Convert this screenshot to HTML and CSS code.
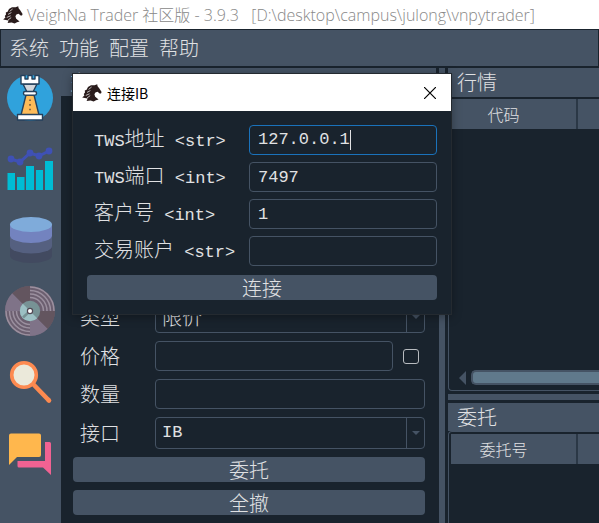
FILE: index.html
```html
<!DOCTYPE html>
<html lang="zh-CN">
<head>
<meta charset="utf-8">
<meta name="viewport" content="width=device-width, initial-scale=1">
<title>VeighNa Trader</title>
<link rel="stylesheet" href="styles.css">
</head>
<body>
<svg class="defs" aria-hidden="true">
  <symbol id="horse" viewBox="0 0 20 18">
    <path fill="#2a1c1c" d="M6 3 L9 1.200 L12.600 1.200 L15.200 .2 L15.600 2.200 L17.400 4.600 L19.600 8 L19 9.400 L17.600 9.600 L15.600 7.800 L13.400 8.400 L12.400 10.200 L13.200 12.800 L16.600 15.400 L14 16.200 L11.600 17.600 L8.600 16.400 L4.600 17 L5.600 14.600 L2.800 14 L.2 13.400 L2.400 11.400 L1.800 10 L3 8.600 L2.800 6.600 L4.600 5.800 Z"/>
    <path stroke="#fff" stroke-width=".7" fill="none" d="M9.600 3 L6.600 5.400 M8.400 6.600 L5 8.400 M3.800 11.400 L7.600 9.800 M5 14 L8.200 11.600"/>
  </symbol>
</svg>
<div class="app">
  <header class="titlebar">
    <svg class="logo" aria-hidden="true"><use href="#horse"/></svg>
    <span class="caption">VeighNa Trader 社区版 - 3.9.3   [D:\desktop\campus\julong\vnpytrader]</span>
  </header>
  <nav class="menubar">
    <button type="button">系统</button>
    <button type="button">功能</button>
    <button type="button">配置</button>
    <button type="button">帮助</button>
  </nav>
  <div class="workspace">
    <aside class="toolbar">
      <button type="button" aria-label="连接">
        <svg viewBox="0 0 50 50">
          <circle cx="25" cy="25" r="23" fill="#30a2dc"/>
          <g stroke="#24405c" stroke-width="1.4" stroke-linejoin="round">
            <path fill="#fdbb58" d="M21 22 H29 L34 42 H16 Z"/>
            <path fill="#d3d6db" d="M18 11 H32 L28 19 H22 Z"/>
            <path fill="#fff" d="M16 2.500 H20 V6 H23 V2.500 H27 V6 H30 V2.500 H34 V11 H16 Z"/>
            <rect x="18.500" y="18.500" width="13" height="3.600" rx="1.600" fill="#fff"/>
            <rect x="12.500" y="41.500" width="25" height="5.500" fill="#fff"/>
          </g>
          <path stroke="#5b4a3a" stroke-width="1.400" stroke-dasharray="1.600 3" d="M25 26.500 V38"/>
        </svg>
      </button>
      <button type="button" aria-label="图表">
        <svg viewBox="0 0 50 50">
          <path fill="#00bcd4" d="M2.500 29 H10 V46 H2.500Z M12 33 H19.500 V46 H12Z M21 22 H29 V46 H21Z M31 26 H38 V46 H31Z M40 17 H48 V46 H40Z"/>
          <path fill="none" stroke="#3f51b5" stroke-width="3" d="M6 15 L15 18 L25 9 L34 12 L44 7"/>
          <g fill="#3f51b5"><circle cx="6" cy="15" r="3.400"/><circle cx="15" cy="18" r="3.400"/><circle cx="25" cy="9" r="3.400"/><circle cx="34" cy="12" r="3.400"/><circle cx="44" cy="7" r="3.400"/></g>
        </svg>
      </button>
      <button type="button" aria-label="数据">
        <svg viewBox="0 0 50 50">
          <path fill="#424a60" d="M5 31 V40.500 A21 7.500 0 0 0 47 40.500 V31Z"/>
          <path fill="#556080" d="M5 20 V31 A21 7.500 0 0 0 47 31 V20Z"/>
          <path fill="#7383bf" d="M5 9.500 V20.500 A21 7.500 0 0 0 47 20.500 V9.500Z"/>
          <ellipse cx="26" cy="9.500" rx="21" ry="7.500" fill="#7fabda"/>
        </svg>
      </button>
      <button type="button" aria-label="录制">
        <svg viewBox="0 0 50 50">
          <circle cx="25" cy="25" r="25" fill="#6c5f70"/>
          <path fill="#7f7388" d="M25 25 L0 25 A25 25 0 0 1 7.300 7.300Z M25 25 V50 A25 25 0 0 0 42.700 42.700Z"/>
          <path fill="#63555f" d="M25 25 V0 A25 25 0 0 0 7.300 7.300Z M25 25 H50 A25 25 0 0 1 42.700 42.700Z"/>
          <g fill="none" stroke="#9b909f" stroke-width="1.500">
            <path d="M25 1 A24 24 0 0 1 49 25 M25 4.500 A20.500 20.500 0 0 1 45.500 25 M25 8 A17 17 0 0 1 42 25 M25 11.500 A13.500 13.500 0 0 1 38.500 25"/>
            <path d="M25 49 A24 24 0 0 1 1 25 M25 45.500 A20.500 20.500 0 0 1 4.500 25 M25 42 A17 17 0 0 1 8 25 M25 38.500 A13.500 13.500 0 0 1 11.500 25"/>
          </g>
          <circle cx="25" cy="25" r="10.200" fill="#779295"/>
          <path fill="#9cc0c4" d="M25 25 L17.800 17.800 A10.200 10.200 0 0 0 17.800 32.200Z M25 25 L17.800 32.200 A10.200 10.200 0 0 0 25 35.200Z M25 25 V35.200 A10.200 10.200 0 0 0 32.200 32.200Z"/>
          <path stroke="#779295" stroke-width="2.500" d="M25 25 L18 31.500"/>
          <circle cx="25" cy="25" r="2.600" fill="#fff" stroke="#514854" stroke-width="1.200"/>
        </svg>
      </button>
      <button type="button" aria-label="查询">
        <svg viewBox="0 0 50 50">
          <path stroke="#fd8a50" stroke-width="4.600" stroke-linecap="round" d="M29 28 L43 42.500 M43 42.500 L44 43.500"/>
          <circle cx="19" cy="18" r="12.300" fill="#ebe9da" stroke="#fd8a50" stroke-width="3.600"/>
        </svg>
      </button>
      <button type="button" aria-label="社区">
        <svg viewBox="0 0 50 50">
          <path fill="#f06292" d="M40 14 H44.500 Q46 14 46 15.500 V47 L38 39.500 H14 Q12.500 39.500 12.500 38 V33 H40Z"/>
          <path fill="#ffb74d" d="M6 5.500 H34 Q36 5.500 36 7.500 V27 Q36 29 34 29 H12 L4 37 V7.500 Q4 5.500 6 5.500Z"/>
        </svg>
      </button>
    </aside>

    <section class="dock trading">
      <h2 class="dock-title">交易</h2>
      <form class="order-form">
        <div class="field">
          <label for="kind">类型</label>
          <span class="select"><select id="kind"><option>限价</option></select></span>
        </div>
        <div class="field">
          <label for="price">价格</label>
          <input id="price" class="text" type="text">
          <input class="tick" type="checkbox" aria-label="价格">
        </div>
        <div class="field">
          <label for="volume">数量</label>
          <input id="volume" class="text" type="text">
        </div>
        <div class="field">
          <label for="gateway">接口</label>
          <span class="select"><select id="gateway" class="latin"><option>IB</option></select></span>
        </div>
        <button class="action" type="button">委托</button>
        <button class="action" type="button">全撤</button>
      </form>
    </section>

    <div class="splitter"></div>

    <div class="monitors">
      <section class="dock market">
        <h2 class="dock-title">行情</h2>
        <div class="frame">
          <table>
            <thead><tr><th scope="col">代码</th><th></th></tr></thead>
          </table>
          <div class="scrollbar"><i class="arrow"></i><i class="thumb"></i></div>
        </div>
      </section>
      <div class="splitter-row"></div>
      <section class="dock orders">
        <h2 class="dock-title">委托</h2>
        <div class="frame">
          <table>
            <thead><tr><th scope="col">委托号</th><th></th></tr></thead>
          </table>
        </div>
      </section>
    </div>
  </div>
</div>

<div class="dialog" role="dialog" aria-labelledby="dialog-title">
  <div class="dialog-bar">
    <svg class="logo" aria-hidden="true"><use href="#horse"/></svg>
    <span id="dialog-title" class="dialog-title">连接IB</span>
    <button type="button" class="close" aria-label="关闭">
      <svg viewBox="0 0 12 12"><path d="M0 0 L12 12 M12 0 L0 12" stroke="#000" stroke-width="1.200"/></svg>
    </button>
  </div>
  <form class="dialog-form">
    <div class="field">
      <label for="host"><span class="latin">TWS</span>地址<span class="latin"> &lt;str&gt;</span></label>
      <span class="text focused"><input id="host" type="text" value="127.0.0.1"><i class="caret"></i></span>
    </div>
    <div class="field">
      <label for="port"><span class="latin">TWS</span>端口<span class="latin"> &lt;int&gt;</span></label>
      <input id="port" class="text" type="text" value="7497">
    </div>
    <div class="field">
      <label for="client">客户号<span class="latin"> &lt;int&gt;</span></label>
      <input id="client" class="text" type="text" value="1">
    </div>
    <div class="field">
      <label for="account">交易账户<span class="latin"> &lt;str&gt;</span></label>
      <input id="account" class="text" type="text">
    </div>
    <button class="action" type="button">连接</button>
  </form>
</div>
</body>
</html>
```
FILE: styles.css
```css
:root {
  --dark: #19232d;
  --grey: #455364;
  --text: #e0e1e3;
  --ui: "Noto Sans CJK SC", sans-serif;
  --mono: "Liberation Mono", "Noto Sans CJK SC", monospace;
}

* { box-sizing: border-box; }

body {
  margin: 0;
  background: var(--dark);
  color: var(--text);
  font: 300 20px/24px var(--ui);
  overflow: hidden;
}

button, input, select {
  margin: 0;
  padding: 0;
  border: 0;
  background: none;
  color: inherit;
  font: inherit;
}

.defs { position: absolute; width: 0; height: 0; }
.latin { font-family: var(--mono); font-size: 17px; white-space: pre; }
.logo { width: 20px; height: 18px; flex: none; }

.app {
  display: flex;
  flex-direction: column;
  height: 100vh;
}

.titlebar {
  display: flex;
  align-items: center;
  gap: 4px;
  height: 29px;
  padding-left: 3px;
  background: #fff;
  color: #888;
  font: 300 16px/24px "Open Sans", "Noto Sans CJK SC", sans-serif;
}
.caption { white-space: pre; }

.menubar {
  display: flex;
  align-items: center;
  gap: 10px;
  height: 39px;
  padding: 0 8px;
  border: 1px solid var(--dark);
  border-bottom-width: 2px;
  background: var(--grey);
}

.workspace {
  display: flex;
  flex: 1;
  min-height: 0;
}

.toolbar {
  display: flex;
  flex-direction: column;
  gap: 21px;
  width: 61px;
  flex: none;
  padding: 5px 6px 0 5px;
  background: var(--grey);
}
.toolbar button { height: 50px; }
.toolbar svg { display: block; width: 50px; height: 50px; }

.dock { display: flex; flex-direction: column; min-height: 0; }
.dock-title {
  flex: none;
  margin: 0;
  height: 28px;
  padding: 2px 9px;
  background: var(--grey);
  font-size: 20px;
  font-weight: 300;
}

.trading { flex: 375 1 0; }
.order-form {
  display: flex;
  flex: 1;
  flex-direction: column;
  justify-content: flex-end;
  gap: 8px;
  padding: 0 11px 8px 12px;
}

.field { display: flex; align-items: center; }
.field label {
  flex: none;
  padding-left: 7px;
  white-space: nowrap;
}
.order-form label { width: 82px; }

.text {
  flex: 1;
  min-width: 0;
  height: 30px;
  padding: 0 8px;
  border: 1px solid var(--grey);
  border-radius: 4px;
  font-family: var(--mono);
  font-size: 17px;
}
.tick {
  appearance: none;
  width: 16px;
  height: 15px;
  margin: 0 6px 0 10px;
  border: 1px solid #b8bcc0;
  border-radius: 3px;
}

.select {
  position: relative;
  display: flex;
  flex: 1;
  height: 32px;
  border: 1px solid var(--grey);
  border-radius: 4px;
}
.select select {
  appearance: none;
  flex: 1;
  padding: 0 6px;
  outline: 0;
}
.select .latin { font-family: var(--mono); font-size: 17px; }
.select::before {
  content: "";
  position: absolute;
  top: 0;
  right: 0;
  bottom: 0;
  width: 17px;
  border-left: 1px solid var(--grey);
}
.select::after {
  content: "";
  position: absolute;
  top: 13px;
  right: 4px;
  border: 4px solid transparent;
  border-top-color: var(--grey);
  border-bottom: 0;
}

.action {
  height: 25px;
  border-radius: 4px;
  background: var(--grey);
}

.splitter {
  flex: none;
  width: 12px;
  border: solid var(--dark);
  border-width: 0 3px;
  background: var(--grey);
}

.monitors {
  display: flex;
  flex: 151 1 0;
  flex-direction: column;
  min-width: 0;
}
.market { flex: 323 1 0; }
.orders { flex: 120 1 0; }
.splitter-row { flex: none; height: 6px; margin: 3px 0; background: var(--grey); }

.frame {
  display: flex;
  flex: 1;
  flex-direction: column;
  justify-content: space-between;
  padding: 2px 0 5px 2px;
  border: solid var(--grey);
  border-width: 1px 0 1px 1px;
  border-radius: 4px 0 0 4px;
}
.orders .frame { border-bottom: 0; border-bottom-left-radius: 0; }

table {
  width: 100%;
  border-collapse: collapse;
  table-layout: fixed;
}
th {
  height: 30px;
  padding: 0 20px 0 0;
  background: var(--grey);
  font-size: 16px;
  font-weight: 300;
  line-height: 20px;
}
th:first-child { width: 85%; border-right: 2px solid #2b3846; }

.scrollbar { display: flex; align-items: center; gap: 5px; padding-left: 8px; }
.arrow {
  border: 7px solid transparent;
  border-right-color: var(--grey);
  border-left: 0;
}
.thumb {
  flex: 1;
  height: 15px;
  border: 2px solid var(--grey);
  border-right: 0;
  border-radius: 5px 0 0 5px;
  background: #60798b;
}

.dialog {
  position: absolute;
  top: 74px;
  left: 73px;
  width: 378px;
  background: var(--dark);
  box-shadow: 0 0 0 1px #242a30, 0 2px 10px rgba(0, 0, 0, .4);
}
.dialog-bar {
  display: flex;
  align-items: center;
  height: 37px;
  padding: 0 15px 0 9px;
  background: #fff;
  color: #000;
}
.dialog-title {
  flex: 1;
  padding-left: 5px;
  font: 14px/20px "Noto Sans CJK SC", sans-serif;
}
.close svg { display: block; width: 12px; height: 12px; }

.dialog-form {
  display: flex;
  flex-direction: column;
  gap: 7px;
  padding: 14px;
}
.dialog-form label { width: 162px; }
.dialog-form .action { margin-top: 2px; }

.focused {
  display: flex;
  align-items: center;
  border-color: #1a72bb;
}
.focused input { width: 92px; outline: 0; }
.caret { width: 1px; height: 20px; background: var(--text); }
```
